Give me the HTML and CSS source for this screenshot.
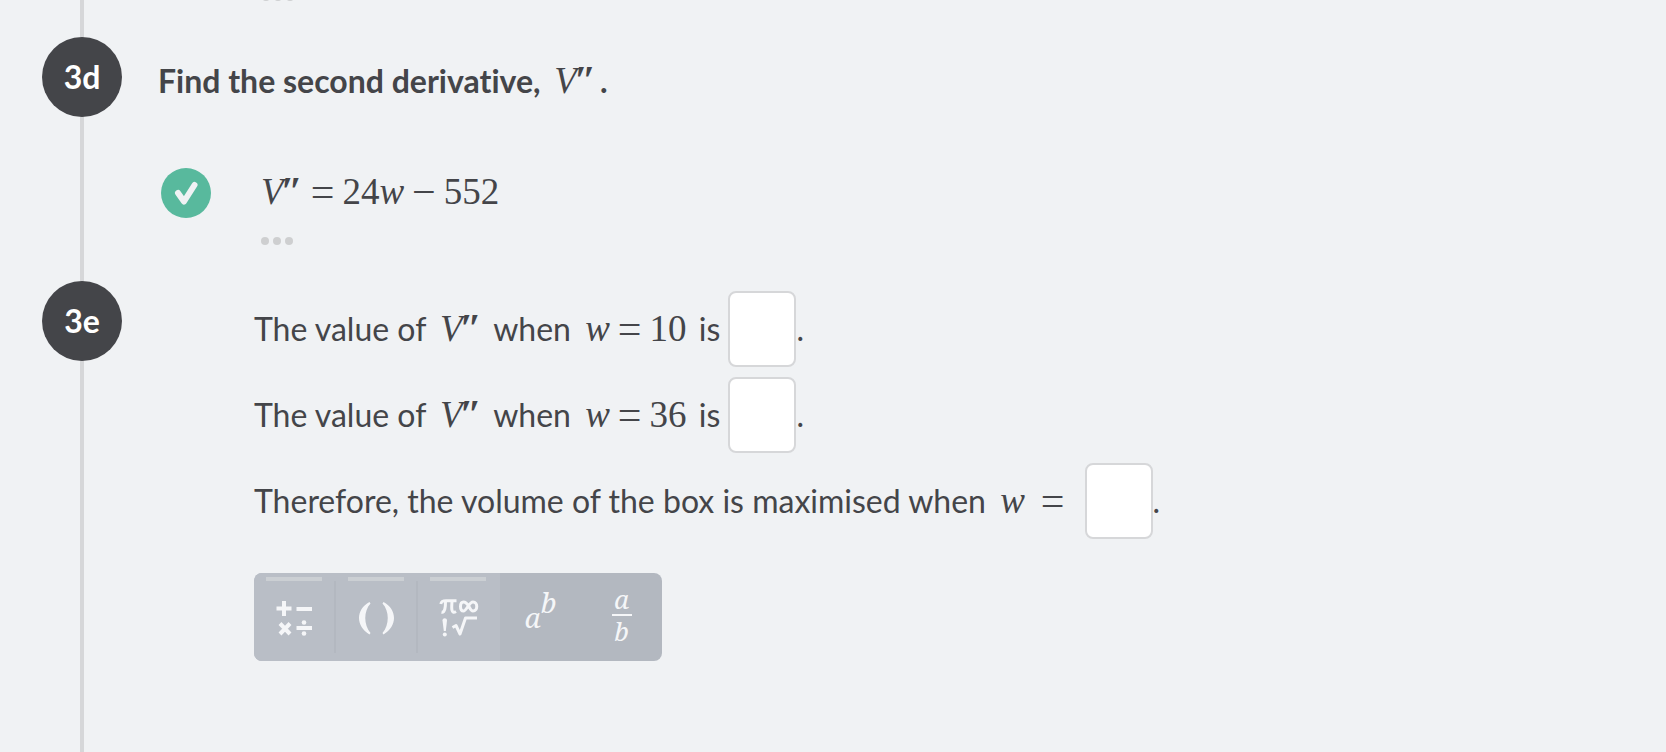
FILE: index.html
```html
<!DOCTYPE html>
<html lang="en">
<head>
    <meta charset="utf-8" />
    <title>Question 3</title>
    <link rel="stylesheet" href="styles.css">
</head>
<body>
    <main class="steps">
        <div class="previous">
            <div class="dots"><i></i><i></i><i></i></div>
        </div>

        <section class="step">
            <div class="badge">3d</div>
            <div class="content">
                <h2 class="question">Find the second derivative, <span class="math"><var>V</var><span class="prime">″</span></span>.</h2>
                <div class="answer">
                    <svg class="check" viewBox="0 0 50 50" role="img" aria-label="Correct">
                        <circle cx="25" cy="25" r="25" />
                        <path d="M17 25L23 33.500L33.500 17" />
                    </svg>
                    <div>
                        <div class="math result"><var>V</var><span class="prime">″</span><span class="op">=</span>24<var>w</var><span class="op">−</span>552</div>
                        <div class="dots"><i></i><i></i><i></i></div>
                    </div>
                </div>
            </div>
        </section>

        <section class="step">
            <div class="badge">3e</div>
            <form class="content fields">
                <label class="line">The value of <span class="math"><var>V</var><span class="prime">″</span></span> when <span class="math"><var>w</var><span class="op">=</span>10</span> is <input type="text" class="box">.</label>
                <label class="line">The value of <span class="math"><var>V</var><span class="prime">″</span></span> when <span class="math"><var>w</var><span class="op">=</span>36</span> is <input type="text" class="box">.</label>
                <label class="line">Therefore, the volume of the box is maximised when <span class="math"><var>w</var><span class="op wide">=</span></span><input type="text" class="box">.</label>

                <div class="toolbar">
                    <button type="button" class="tool group" aria-label="Operators">
                        <svg viewBox="0 0 40 40">
                            <path class="thick" d="M1.500 10.500H16.500M9 3V18M21.500 11H37M21.500 30H37M5 25.500L15 36M15 25.500L5 36" />
                            <circle cx="29" cy="24.500" r="2.300" />
                            <circle cx="29" cy="35.500" r="2.300" />
                        </svg>
                    </button>
                    <button type="button" class="tool group" aria-label="Brackets">
                        <svg viewBox="0 0 40 40">
                            <path d="M12.500 4C-1.500 11.500 -1.500 28.500 12.500 36.500L13.500 35C6.500 27 6.500 13 13.500 5.500ZM26.500 4C40.500 11.500 40.500 28.500 26.500 36.500L25.500 35C32.500 27 32.500 13 25.500 5.500Z" />
                        </svg>
                    </button>
                    <button type="button" class="tool group" aria-label="Symbols">
                        <svg viewBox="0 0 40 40">
                            <path class="pi" d="M1.800 6C2.500 3 4 2.800 7 2.800H17.500M6.500 3.500C6.500 9 6 15 2.500 14.300M13 3.500C12.500 10 12 16.500 17 13.500" />
                            <path class="infinity" d="M30 8.500C27.500 4.500 26 4 24.500 4C20.500 4 20.500 13 24.500 13C27.500 13 30 4 34 4C39 4 39 13 34 13C32 13 31 10.500 30 8.500Z" />
                            <path d="M3.500 22.500C3.500 19.500 8 19.500 8 22.500L6.800 33H4.800Z" />
                            <circle cx="5.800" cy="36.500" r="2" />
                            <path class="root" d="M13.500 29.500L17 27.500L21 36L26.500 20H38" />
                        </svg>
                    </button>
                    <button type="button" class="tool" aria-label="Power"><span class="power">a<sup>b</sup></span></button>
                    <button type="button" class="tool" aria-label="Fraction"><span class="fraction"><span>a</span><span>b</span></span></button>
                </div>
            </form>
        </section>
    </main>
</body>
</html>
```
FILE: styles.css
```css
* {
    box-sizing: border-box;
}
body {
    margin: 0;
    background-color: #f0f2f4;
    color: #444549;
    font-family: Lato, "Liberation Sans", sans-serif;
    font-size: 32px;
    font-variant-ligatures: none;
}

/* vertical line behind the badges */
.steps {
    min-height: 100vh;
    padding-left: 42px;
    background: linear-gradient(#d6d7d9, #d6d7d9) 80px 0 / 4px 100% no-repeat;
}
.previous {
    height: 37px;
    padding-left: 220px;
}
.previous .dots {
    height: 1px;
    padding-top: 0;
    overflow: hidden;
    align-items: flex-end;
}
.step {
    display: flex;
    align-items: flex-start;
    gap: 36px;
    min-height: 244px;
}
.badge {
    flex: none;
    width: 80px;
    height: 80px;
    border-radius: 50%;
    background-color: #444549;
    color: #fff;
    font-weight: bold;
    line-height: 80px;
    text-align: center;
}
.content {
    flex: 1;
}
.question {
    margin: 0;
    padding-top: 4px;
    font-size: 32px;
    line-height: 80px;
}

.math {
    font-family: "Liberation Serif", serif;
    font-size: 37px;
    font-weight: normal;
    margin: 0 4px 0 6px;
}
.math var {
    font-style: italic;
}
.prime {
    font-size: 40px;
    font-style: italic;
    font-weight: bold;
    line-height: 0;
    margin-left: -3px;
}
.op {
    font-size: 42px;
    line-height: 0;
    vertical-align: -2px;
    margin: 0 8px;
}
.op.wide {
    margin: 0 16px;
}

.answer {
    display: flex;
    align-items: flex-start;
    gap: 50px;
    padding: 47px 0 0 3px;
}
.check {
    width: 50px;
    height: 50px;
    fill: #58b99d;
}
.check path {
    fill: none;
    stroke: #f0f2f4;
    stroke-width: 6;
    stroke-linecap: round;
    stroke-linejoin: round;
}
.result {
    line-height: 48px;
    margin: 0;
}
.dots {
    display: flex;
    gap: 4px;
    padding-top: 21px;
}
.dots i {
    flex: none;
    width: 8px;
    height: 8px;
    border-radius: 50%;
    background-color: #cecfd0;
}

.fields {
    display: flex;
    flex-direction: column;
    align-items: flex-start;
    gap: 10px;
    padding: 10px 0 0 96px;
}
.line {
    line-height: 48px;
}
.box {
    width: 68px;
    height: 76px;
    padding: 0 8px;
    border: 2px solid #d6d7d9;
    border-radius: 8px;
    background-color: #fff;
    color: inherit;
    font: 36px "Liberation Serif", serif;
}

.toolbar {
    display: flex;
    width: 408px;
    margin-top: 24px;
    border-radius: 8px;
    overflow: hidden;
    background-color: #b3b8c0;
}
.tool {
    position: relative;
    display: flex;
    flex: 1;
    align-items: center;
    justify-content: center;
    height: 88px;
    padding: 0;
    border: 0;
    background: none;
    color: #f5f6f8;
    font: italic 28px "Noto Serif", "Liberation Serif", serif;
    cursor: pointer;
}
.group {
    flex: none;
    width: 82px;
    padding-top: 2px;
    background-color: #b9bec6;
}
.group::before {
    content: "";
    position: absolute;
    top: 4px;
    left: 12px;
    width: 56px;
    height: 4px;
    background-color: #cbcfd3;
}
.group + .group::after {
    content: "";
    position: absolute;
    top: 8px;
    left: -2px;
    width: 2px;
    height: 72px;
    background-color: #b3b8c0;
}
.tool svg {
    width: 40px;
    height: 40px;
    fill: #f5f6f8;
}
.tool .thick, .tool .pi, .tool .infinity, .tool .root {
    fill: none;
    stroke: #f5f6f8;
    stroke-width: 3;
    stroke-linejoin: round;
}
.tool .thick {
    stroke-width: 4;
}
.power sup {
    font-size: 28px;
    line-height: 0;
    vertical-align: 15px;
}
.fraction {
    display: flex;
    flex-direction: column;
    align-items: center;
    padding-bottom: 4px;
    font-size: 26px;
    line-height: 30px;
}
.fraction span + span {
    width: 20px;
    border-top: 2px solid #f5f6f8;
}
```
